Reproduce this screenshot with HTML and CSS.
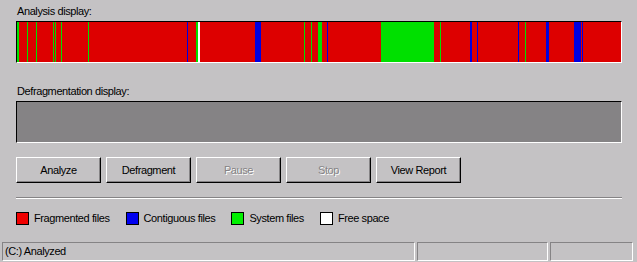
FILE: index.html
```html
<!DOCTYPE html>
<html lang="en">

<head>
    <meta charset="UTF-8">
    <title>Disk Defragmenter</title>
    <link rel="stylesheet" href="styles.css">
</head>

<body>
    <div class="main">
        <div class="label first">Analysis display:</div>
        <div class="cluster-map">
            <div class="seg sys" style="width:2px"></div>
            <div class="seg frag" style="width:8px"></div>
            <div class="seg sys" style="width:1px"></div>
            <div class="seg frag" style="width:8px"></div>
            <div class="seg sys" style="width:1px"></div>
            <div class="seg frag" style="width:16px"></div>
            <div class="seg sys" style="width:1px"></div>
            <div class="seg frag" style="width:1px"></div>
            <div class="seg sys" style="width:1px"></div>
            <div class="seg frag" style="width:5px"></div>
            <div class="seg sys" style="width:1px"></div>
            <div class="seg frag" style="width:26px"></div>
            <div class="seg sys" style="width:1px"></div>
            <div class="seg frag" style="width:98px"></div>
            <div class="seg cont" style="width:1px"></div>
            <div class="seg frag" style="width:8px"></div>
            <div class="seg sys" style="width:2px"></div>
            <div class="seg free" style="width:2px"></div>
            <div class="seg frag" style="width:55px"></div>
            <div class="seg cont" style="width:6px"></div>
            <div class="seg frag" style="width:43px"></div>
            <div class="seg sys" style="width:1px"></div>
            <div class="seg frag" style="width:6px"></div>
            <div class="seg sys" style="width:1px"></div>
            <div class="seg frag" style="width:6px"></div>
            <div class="seg sys" style="width:4px"></div>
            <div class="seg frag" style="width:5px"></div>
            <div class="seg cont" style="width:1px"></div>
            <div class="seg frag" style="width:53px"></div>
            <div class="seg sys" style="width:53px"></div>
            <div class="seg frag" style="width:6px"></div>
            <div class="seg sys" style="width:1px"></div>
            <div class="seg frag" style="width:29px"></div>
            <div class="seg cont" style="width:2px"></div>
            <div class="seg frag" style="width:5px"></div>
            <div class="seg cont" style="width:1px"></div>
            <div class="seg frag" style="width:40px"></div>
            <div class="seg cont" style="width:1px"></div>
            <div class="seg frag" style="width:6px"></div>
            <div class="seg sys" style="width:1px"></div>
            <div class="seg frag" style="width:20px"></div>
            <div class="seg cont" style="width:3px"></div>
            <div class="seg frag" style="width:25px"></div>
            <div class="seg cont" style="width:7px"></div>
            <div class="seg frag" style="width:1px"></div>
            <div class="seg cont" style="width:1px"></div>
            <div class="seg frag" style="width:38px"></div>
        </div>

        <div class="label">Defragmentation display:</div>
        <div class="cluster-map empty"></div>

        <div class="button-row">
            <button class="btn">Analyze</button>
            <button class="btn">Defragment</button>
            <button class="btn" disabled>Pause</button>
            <button class="btn" disabled>Stop</button>
            <button class="btn">View Report</button>
        </div>

        <div class="separator"></div>

        <div class="legend">
            <div class="legend-item"><span class="swatch frag-key"></span>Fragmented files</div>
            <div class="legend-item"><span class="swatch cont-key"></span>Contiguous files</div>
            <div class="legend-item"><span class="swatch sys-key"></span>System files</div>
            <div class="legend-item"><span class="swatch free-key"></span>Free space</div>
        </div>
    </div>

    <div class="status-bar">
        <div class="status-panel main-panel">(C:) Analyzed</div>
        <div class="status-panel mid-panel"></div>
        <div class="status-panel end-panel"></div>
    </div>
</body>

</html>
```

FILE: styles.css
```css
body {
    margin: 0;
    width: 637px;
    height: 262px;
    overflow: hidden;
    background-color: #c4c2c4;
    font-family: "Liberation Sans", Arial, sans-serif;
    font-size: 11px;
    letter-spacing: -0.4px;
    color: #000;
}

.main {
    padding: 0 15px 0 16px;
}

.label {
    line-height: 13px;
    height: 13px;
    margin-top: 22px;
    margin-bottom: 3px;
    padding-left: 1px;
}

.label.first {
    margin-top: 5px;
}

.cluster-map {
    display: flex;
    height: 40px;
    border-top: 1px solid #000;
    border-left: 1px solid #000;
    border-bottom: 1px solid #fff;
    border-right: 1px solid #fff;
    background-color: #dd0000;
}

.cluster-map.empty {
    background-color: #858385;
}

.seg {
    height: 100%;
    flex: none;
}

.frag {
    background-color: #dd0000;
}

.cont {
    background-color: #0000e0;
}

.sys {
    background-color: #00e000;
}

.free {
    background-color: #fff;
}

.button-row {
    display: flex;
    gap: 5px;
    margin-top: 14px;
}

.btn {
    width: 85px;
    height: 26px;
    padding: 0;
    background-color: #c4c2c4;
    border-top: 1px solid #fff;
    border-left: 1px solid #fff;
    border-bottom: 1px solid #000;
    border-right: 1px solid #000;
    box-shadow: inset -1px -1px 0 #858385;
    font-family: inherit;
    font-size: 11px;
    letter-spacing: -0.4px;
    color: #000;
}

.btn:disabled {
    color: #858385;
    text-shadow: 1px 1px 0 #fff;
}

.separator {
    margin-top: 14px;
    border-top: 1px solid #858385;
    border-bottom: 1px solid #fff;
}

.legend {
    display: flex;
    gap: 16px;
    margin-top: 13px;
    height: 13px;
}

.legend-item {
    display: flex;
    align-items: center;
    gap: 5px;
    line-height: 13px;
}

.swatch {
    width: 11px;
    height: 11px;
    border: 1px solid #000;
}

.frag-key {
    background-color: #f00000;
}

.cont-key {
    background-color: #0000f0;
}

.sys-key {
    background-color: #00f000;
}

.free-key {
    background-color: #fff;
}

.status-bar {
    display: flex;
    gap: 2px;
    margin-top: 17px;
    padding-left: 2px;
}

.status-panel {
    height: 17px;
    line-height: 16px;
    padding-left: 2px;
    border-top: 1px solid #858385;
    border-left: 1px solid #858385;
    border-bottom: 1px solid #fff;
    border-right: 1px solid #fff;
    box-sizing: content-box;
}

.main-panel {
    width: 409px;
}

.mid-panel {
    width: 127px;
}

.end-panel {
    width: 79px;
}
```
